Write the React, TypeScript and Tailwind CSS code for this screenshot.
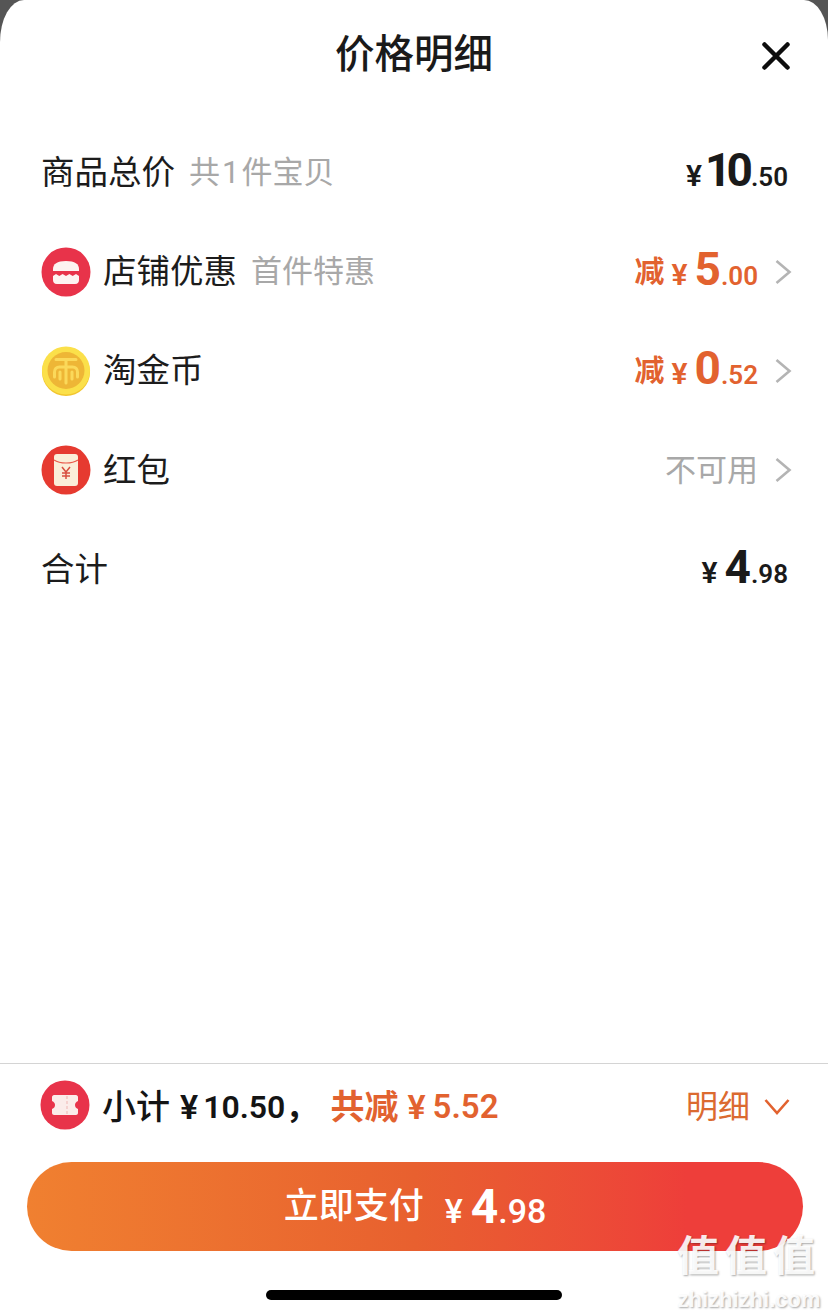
const cjk = "font-['Roboto','Noto_Sans_CJK_SC',sans-serif]";

type PriceProps = {
  yuan: string;
  cents: string;
  color: string;
};

const Price = ({ yuan, cents, color }: PriceProps) => (
  <div className={`flex items-baseline mb-[6px] font-semibold ${color}`}>
    <span className={`text-[30px] leading-none ${yuan.length > 1 ? "mr-[3px]" : "mr-[7px]"}`}>¥</span>
    <span
      className={`text-[46px] leading-none font-bold ${yuan.length > 1 ? "tracking-[-5px]" : "tracking-[-2px]"}`}
    >
      {yuan}
    </span>
    <span className={`text-[26px] leading-none ${yuan.length > 1 ? "ml-[3px]" : "ml-[2px]"}`}>{cents}</span>
  </div>
);

const Chevron = () => (
  <svg width="18" height="26" viewBox="0 0 18 26" fill="none" className="ml-[16px]">
    <path d="M2.5 2 L15.5 13 L2.5 24" stroke="#b4b4b4" strokeWidth="2.6" />
  </svg>
);

const ShopIcon = () => (
  <svg width="50" height="50" viewBox="0 0 50 50">
    <circle cx="25" cy="25" r="24.5" fill="#e8334a" />
    <path d="M12 22c0-5 4-8 13-8s13 3 13 8v2H12z" fill="#fdf3f1" />
    <path d="M12 29l3-2 3.300 2 3.300-2 3.400 2 3.400-2 3.300 2 3.300-2 3 2v4c0 2-1 4-4 4H16c-3 0-4-2-4-4z" fill="#fdf3f1" />
  </svg>
);

const CoinIcon = () => (
  <svg width="50" height="50" viewBox="0 0 50 50">
    <circle cx="25" cy="26" r="24" fill="#f2c62f" />
    <circle cx="25" cy="24.5" r="24" fill="#fbe04a" />
    <circle cx="25" cy="24.500" r="18.500" fill="#eeb636" />
    <path
      d="M15 13.500h20M13.500 31v-5c0-3 2-5 5-5h13c3 0 5 2 5 5v5M25 14v23M19 33v-7M31 33v-7"
      stroke="#fbd95a"
      strokeWidth="3"
      strokeLinecap="round"
      fill="none"
    />
  </svg>
);

const RedPacketIcon = () => (
  <svg width="50" height="50" viewBox="0 0 50 50">
    <circle cx="25" cy="25" r="24.5" fill="#e63a30" />
    <rect x="13" y="9" width="24" height="32" rx="3" fill="#fbeed8" />
    <path d="M13 15c6 4 18 4 24 0" stroke="#e9594a" strokeWidth="1.2" fill="none" />
    <path d="M21 22l4 5 4-5M25 27v7M21 28h8M21 31h8" stroke="#d8503f" strokeWidth="1.5" fill="none" />
  </svg>
);

const TicketIcon = () => (
  <svg width="50" height="50" viewBox="0 0 50 50" className="mb-[4px]">
    <circle cx="25" cy="25" r="24.5" fill="#e8334a" />
    <path
      d="M14 15h22c1 0 2 1 2 2v4c-2 1-3 2-3 4s1 3 3 4v4c0 1-1 2-2 2H14c-1 0-2-1-2-2v-4c2-1 3-2 3-4s-1-3-3-4v-4c0-1 1-2 2-2z"
      fill="#fbecea"
    />
    <path d="M27 16v18" stroke="#f3c6c4" strokeWidth="1.4" strokeDasharray="3 2" />
  </svg>
);

type RowProps = {
  icon?: React.ReactNode;
  label: string;
  note?: React.ReactNode;
  children: React.ReactNode;
};

const Row = ({ icon, label, note, children }: RowProps) => (
  <div className="h-[99.25px] flex items-center justify-between pl-[41px] pr-[36px]">
    <div className="flex items-center">
      {icon && <div className="mr-[12px] flex">{icon}</div>}
      <span className="text-[33.5px] leading-none text-[#1c1c1c]">{label}</span>
      {note && <span className="ml-[14px] text-[31px] leading-none text-[#a8a8a8]">{note}</span>}
    </div>
    <div className="flex items-center">{children}</div>
  </div>
);

const Discount = ({ yuan, cents }: { yuan: string; cents: string }) => (
  <>
    <span className="text-[30px] leading-none font-semibold text-[#e2622f] mr-[7px]">减</span>
    <Price yuan={yuan} cents={cents} color="text-[#e2622f]" />
    <Chevron />
  </>
);

export default function App() {
  return (
    <div className={`w-[828px] h-[1316px] bg-[#555555] overflow-hidden ${cjk}`}>
      <div className="relative w-full h-full bg-white rounded-tl-[24px_42px] rounded-tr-[24px_40px] flex flex-col">
        <header className="relative h-[110px] flex items-center justify-center shrink-0">
          <h1 className="text-[39.5px] leading-none font-medium text-[#1a1a1a]">价格明细</h1>
          <svg width="30" height="30" viewBox="0 0 30 30" className="absolute left-[761px] top-[41px]">
            <path d="M3.500 3.500 L26.500 26.500 M26.500 3.500 L3.500 26.500" stroke="#0d0d0d" strokeWidth="4.500" strokeLinecap="round" />
          </svg>
        </header>

        <div className="pt-[13px]">
          <Row
            label="商品总价"
            note={
              <>
                共<span className="mx-[2px]">1</span>件宝贝
              </>
            }
          >
            <div className="mr-[4px]">
              <Price yuan="10" cents=".50" color="text-[#1a1a1a]" />
            </div>
          </Row>
          <Row icon={<ShopIcon />} label="店铺优惠" note="首件特惠">
            <Discount yuan="5" cents=".00" />
          </Row>
          <Row icon={<CoinIcon />} label="淘金币">
            <Discount yuan="0" cents=".52" />
          </Row>
          <Row icon={<RedPacketIcon />} label="红包">
            <span className="text-[31px] leading-none text-[#a8a8a8]">不可用</span>
            <Chevron />
          </Row>
          <Row label="合计">
            <div className="mr-[4px]">
              <Price yuan="4" cents=".98" color="text-[#1a1a1a]" />
            </div>
          </Row>
        </div>

        <div className="flex-1" />

        <div className="border-t border-[#d4d4d4] h-[99px] shrink-0 flex items-center justify-between pl-[40px] pr-[38px] pb-[13px]">
          <div className="flex items-center">
            <TicketIcon />
            <span className="ml-[12px] text-[34px] leading-none font-medium text-[#141414]">小计</span>
            <span className="ml-[10px] text-[34px] leading-none font-semibold text-[#141414]">¥</span>
            <span className="ml-[5px] text-[32px] leading-none font-semibold text-[#141414]">10.50，</span>
            <span className="ml-[13px] text-[34px] leading-none font-semibold text-[#e2622f]">共减</span>
            <span className="ml-[9px] text-[34px] leading-none font-semibold text-[#e2622f]">¥</span>
            <span className="ml-[7px] text-[33px] leading-none font-semibold text-[#e2622f]">5.52</span>
          </div>
          <div className="flex items-center">
            <span className="text-[32px] leading-none text-[#db6a30]">明细</span>
            <svg width="26" height="18" viewBox="0 0 26 18" fill="none" className="ml-[14px]">
              <path d="M1.5 2 L13 15 L24.5 2" stroke="#e2622f" strokeWidth="2.6" />
            </svg>
          </div>
        </div>

        <div className="shrink-0 px-[25px]">
          <button className="ml-[2px] w-[776px] h-[89px] rounded-full bg-gradient-to-r from-[#f08030] via-[#e8602f] to-[#ee3e3a] to-85% flex items-center justify-center text-white">
            <span className="text-[35px] leading-none font-medium mr-[21px]">立即支付</span>
            <span className="flex items-baseline font-medium">
              <span className="text-[34px] leading-none mr-[8px]">¥</span>
              <span className="text-[48px] leading-none font-bold">4</span>
              <span className="text-[34px] leading-none">.98</span>
            </span>
          </button>
        </div>

        <div className="shrink-0 h-[65px] flex justify-center pt-[39px]">
          <div className="w-[296px] h-[10px] rounded-full bg-black" />
        </div>

        <div className="absolute left-[677px] top-[1227px] flex flex-col items-center text-white/90 [text-shadow:1px_1px_2px_rgba(0,0,0,0.35)]">
          <span className="h-[60px] text-[42px] leading-[60px] tracking-[6px] font-bold whitespace-nowrap">值值值</span>
          <span className="h-[25px] text-[22px] leading-[25px] font-bold font-['Liberation_Sans',sans-serif] whitespace-nowrap">zhizhizhi.com</span>
        </div>
      </div>
    </div>
  );
}
